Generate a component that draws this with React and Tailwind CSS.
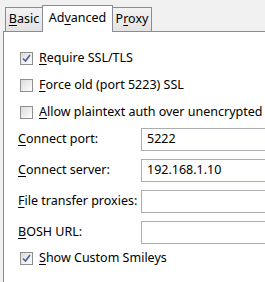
import React from "react";

const font = { fontFamily: '"Microsoft YaHei","Noto Sans","Open Sans",sans-serif' };

function U({ children }) {
  return <span className="underline underline-offset-2">{children}</span>;
}

function Check({ checked }) {
  return (
    <div className="w-[13px] h-[13px] border border-[#8f8f8f] bg-gradient-to-br from-[#dcdcdc] to-[#ffffff] flex items-center justify-center shrink-0">
      {checked && (
        <svg width="9" height="9" viewBox="0 0 9 9">
          <path d="M1 4.5 L3.5 7 L8 1" stroke="#4a5f97" strokeWidth="1.6" fill="none" />
        </svg>
      )}
    </div>
  );
}

function CheckRow({ checked, first, rest }) {
  return (
    <div className="h-[27px] flex items-center pl-[16px] gap-[6px]">
      <Check checked={checked} />
      <span className="whitespace-nowrap text-[12.5px] text-black">
        <U>{first}</U>
        {rest}
      </span>
    </div>
  );
}

function InputRow({ first, rest, value }) {
  return (
    <div className="h-[23px] flex items-center">
      <div className="w-[137px] pl-[14px] text-[12.5px] text-black whitespace-nowrap">
        <U>{first}</U>
        {rest}
      </div>
      <div className="flex-1 h-[23px] border border-[#abadb3] bg-white flex items-center pl-[5px] text-[12.5px] text-black">
        {value}
      </div>
    </div>
  );
}

export default function App() {
  return (
    <div className="w-[265px] h-[282px] bg-[#f0f0f0] overflow-hidden relative" style={font}>
      <div className="flex items-end h-[31px] pl-[5px]">
        <div className="h-[24px] w-[38px] border border-[#898c95] border-b-0 bg-gradient-to-b from-[#f2f2f2] to-[#e3e3e3] flex items-center justify-center text-[12.5px] text-black">
          <span><U>B</U>asic</span>
        </div>
        <div className="h-[27px] w-[71px] -ml-[1px] border border-[#898c95] border-b-0 bg-white flex items-center justify-center text-[12.5px] text-black relative z-10 mb-[-1px] pb-[2px]">
          <span>Ad<U>v</U>anced</span>
        </div>
        <div className="h-[24px] w-[40px] -ml-[1px] border border-[#898c95] border-b-0 bg-gradient-to-b from-[#f2f2f2] to-[#e3e3e3] flex items-center justify-center text-[12.5px] text-black">
          <span>P<U>r</U>oxy</span>
        </div>
      </div>
      <div className="ml-[3px] border-t border-l border-[#898c95] bg-white h-[260px] w-[300px]">
        <div className="pt-[13px]">
          <CheckRow checked first="R" rest="equire SSL/TLS" />
          <CheckRow first="F" rest="orce old (port 5223) SSL" />
          <CheckRow first="A" rest="llow plaintext auth over unencrypted streams" />
        </div>
        <div className="flex flex-col gap-[8px] mt-[2px] w-[262px]">
          <InputRow first="C" rest="onnect port:" value="5222" />
          <InputRow first="C" rest="onnect server:" value="192.168.1.10" />
          <InputRow first="F" rest="ile transfer proxies:" value="" />
          <InputRow first="B" rest="OSH URL:" value="" />
        </div>
        <div className="mt-[1px]">
          <CheckRow checked first="S" rest="how Custom Smileys" />
        </div>
      </div>
    </div>
  );
}
